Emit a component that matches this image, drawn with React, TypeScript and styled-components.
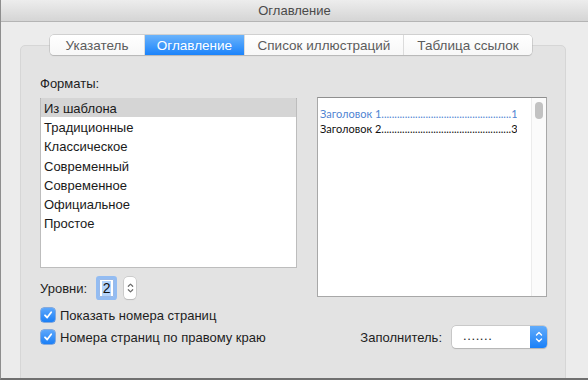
import React from "react";
import styled, { createGlobalStyle } from "styled-components";

const Global = createGlobalStyle`
  html, body { margin: 0; padding: 0; background: #ececec; }
  body { font-family: "Liberation Sans", Arial, sans-serif; }
`;

const Window = styled.div`
  width: 588px;
  height: 380px;
  box-sizing: border-box;
  border-left: 1px solid #8e8e8e;
  border-bottom: 2px solid #707070;
  background: #ececec;
  display: flex;
  flex-direction: column;
  overflow: hidden;
  font-size: 13px;
  color: #1d1d1d;
`;

const TitleBar = styled.div`
  height: 22px;
  flex: none;
  box-sizing: border-box;
  border-bottom: 1px solid #b4b4b4;
  background: linear-gradient(#ededed, #d5d5d5);
  display: flex;
  align-items: center;
  justify-content: center;
  color: #4a4a4a;
  font-size: 13px;
`;

const Body = styled.div`
  flex: 1;
  padding: 13px 22px 0 19px;
  display: flex;
  flex-direction: column;
`;

const TabBar = styled.div`
  position: relative;
  z-index: 1;
  align-self: flex-start;
  margin-left: 30px;
  height: 20px;
  display: flex;
  box-sizing: border-box;
  border-radius: 4px;
  background: linear-gradient(#ffffff, #f7f7f7);
  box-shadow: 0 0 0 0.5px #b3b3b3, 0 1px 1px rgba(0, 0, 0, 0.18);
  overflow: hidden;
`;

const Tab = styled.div<{ $w: number; $active?: boolean }>`
  width: ${(p) => p.$w}px;
  height: 20px;
  display: flex;
  align-items: center;
  justify-content: center;
  font-size: 13.5px;
  box-sizing: border-box;
  color: ${(p) => (p.$active ? "#ffffff" : "#5c5c5c")};
  background: ${(p) =>
    p.$active ? "linear-gradient(#6ab3fb, #1b83fb)" : "transparent"};
  & + & {
    border-left: 1px solid #dcdcdc;
  }
`;

const Group = styled.div`
  flex: 1;
  margin-top: -10px;
  margin-bottom: -10px;
  border: 1px solid #d6d6d6;
  border-radius: 5px;
  background: #e3e3e3;
  padding: 29px 18px 0 19px;
  display: flex;
  flex-direction: column;
`;

const TopRow = styled.div`
  display: flex;
  gap: 20px;
`;

const LeftCol = styled.div`
  width: 257px;
  display: flex;
  flex-direction: column;
`;

const RightCol = styled.div`
  width: 230px;
  padding-top: 22px;
`;

const Label = styled.div`
  height: 16px;
  line-height: 17px;
  font-size: 13px;
  color: #1d1d1d;
  white-space: nowrap;
`;

const ListBox = styled.div`
  margin-top: 7px;
  height: 170px;
  box-sizing: border-box;
  border: 1px solid #bdbdbd;
  border-top-color: #adadad;
  background: #ffffff;
`;

const ListItem = styled.div<{ $selected?: boolean }>`
  height: 19px;
  box-sizing: border-box;
  padding: 2px 0 0 3px;
  line-height: 17px;
  font-size: 13px;
  color: #1a1a1a;
  background: ${(p) => (p.$selected ? "#d5d5d5" : "transparent")};
  margin-top: ${(p) => (p.$selected ? "-1px" : "0")};
  & + & {
    margin-top: 0.2px;
  }
`;

const LevelsRow = styled.div`
  margin-top: 8px;
  height: 24px;
  display: flex;
  align-items: center;
`;

const NumberField = styled.div`
  margin-left: 12px;
  width: 15px;
  height: 18px;
  box-sizing: border-box;
  border: 1px solid #9bb9e6;
  background: #ffffff;
  box-shadow: 0 0 0 3px #93bcf2;
  border-radius: 1px;
  display: flex;
  align-items: center;
  justify-content: center;
`;

const Selected = styled.span`
  background: #b4d4fb;
  color: #111;
  font-size: 14px;
  line-height: 15px;
  padding: 0 1px;
`;

const Stepper = styled.div`
  margin-left: 10px;
  width: 12px;
  height: 22px;
  box-sizing: border-box;
  border-radius: 4px;
  background: #ffffff;
  box-shadow: 0 0 0 0.5px #b5b5b5, 0 1px 1px rgba(0, 0, 0, 0.15);
  display: flex;
  align-items: center;
  justify-content: center;
`;

const Preview = styled.div`
  height: 200px;
  box-sizing: border-box;
  border: 1px solid #a8a8a8;
  border-top-color: #8f8f8f;
  background: #ffffff;
  display: flex;
`;

const PreviewText = styled.div`
  flex: 1;
  padding: 8px 0 0 2px;
  font-family: "Lato", "Liberation Sans", sans-serif;
  font-size: 11px;
`;

const TocLine = styled.div<{ $blue?: boolean }>`
  width: 197px;
  height: 15px;
  line-height: 15px;
  display: flex;
  white-space: nowrap;
  overflow: hidden;
  color: ${(p) => (p.$blue ? "#4f84d2" : "#111111")};
`;

const Leader = styled.span`
  flex: none;
`;

const ScrollTrack = styled.div`
  width: 14px;
  border-left: 1px solid #ececec;
  background: #fbfbfb;
  display: flex;
  justify-content: center;
  padding-top: 4px;
`;

const Thumb = styled.div`
  width: 8px;
  height: 17px;
  border-radius: 4px;
  background: #c2c2c2;
`;

const BottomRows = styled.div`
  margin-top: 4px;
  display: flex;
  flex-direction: column;
`;

const Row = styled.div`
  height: 22px;
  display: flex;
  align-items: center;
  justify-content: space-between;
`;

const CheckLabel = styled.label`
  display: flex;
  align-items: center;
  gap: 5px;
  margin-left: 1px;
  font-size: 13px;
  color: #1d1d1d;
  white-space: nowrap;
`;

const CheckBox = styled.span`
  width: 14px;
  height: 14px;
  border-radius: 3px;
  background: linear-gradient(#5da7fb, #1b7ff6);
  box-shadow: 0 0 0 0.5px #2a72d6;
  display: flex;
  align-items: center;
  justify-content: center;
`;

const FillerGroup = styled.div`
  display: flex;
  align-items: center;
  gap: 10px;
`;

const Select = styled.div`
  width: 95px;
  height: 22px;
  box-sizing: border-box;
  border-radius: 4px;
  background: #ffffff;
  box-shadow: 0 0 0 0.5px #b0b0b0, 0 1px 1px rgba(0, 0, 0, 0.18);
  display: flex;
  overflow: hidden;
`;

const SelectValue = styled.div`
  flex: 1;
  padding-left: 11px;
  line-height: 20px;
  font-size: 13px;
  letter-spacing: 0.6px;
  color: #222;
`;

const SelectArrow = styled.div`
  width: 17px;
  background: linear-gradient(#62acfb, #1a80f8);
  display: flex;
  align-items: center;
  justify-content: center;
`;

const Chevrons = ({ color, w, h }: { color: string; w: number; h: number }) => (
  <svg width={w} height={h} viewBox="0 0 8 14" fill="none">
    <path d="M1.5 5 L4 2.5 L6.5 5" stroke={color} strokeWidth="1.4" strokeLinecap="round" strokeLinejoin="round" />
    <path d="M1.5 9 L4 11.5 L6.5 9" stroke={color} strokeWidth="1.4" strokeLinecap="round" strokeLinejoin="round" />
  </svg>
);

const Check = () => (
  <svg width="10" height="10" viewBox="0 0 10 10" fill="none">
    <path d="M2 5.3 L4.2 7.5 L8.2 2.3" stroke="#ffffff" strokeWidth="1.8" strokeLinecap="round" strokeLinejoin="round" />
  </svg>
);

const formats = [
  "Из шаблона",
  "Традиционные",
  "Классическое",
  "Современный",
  "Современное",
  "Официальное",
  "Простое",
];

const DOTS = ".".repeat(50);

export default function App() {
  return (
    <>
      <Global />
      <Window>
        <TitleBar>Оглавление</TitleBar>
        <Body>
          <TabBar>
            <Tab $w={94}>Указатель</Tab>
            <Tab $w={100} $active>Оглавление</Tab>
            <Tab $w={159}>Список иллюстраций</Tab>
            <Tab $w={129}>Таблица ссылок</Tab>
          </TabBar>
          <Group>
            <TopRow>
              <LeftCol>
                <Label>Форматы:</Label>
                <ListBox>
                  {formats.map((f, i) => (
                    <ListItem key={f} $selected={i === 0}>
                      {f}
                    </ListItem>
                  ))}
                </ListBox>
                <LevelsRow>
                  <Label>Уровни:</Label>
                  <NumberField>
                    <Selected>2</Selected>
                  </NumberField>
                  <Stepper>
                    <Chevrons color="#6b6b6b" w={7} h={14} />
                  </Stepper>
                </LevelsRow>
              </LeftCol>
              <RightCol>
                <Preview>
                  <PreviewText>
                    <TocLine $blue>
                      <span>Заголовок 1</span>
                      <Leader>{DOTS}</Leader>
                      <span>1</span>
                    </TocLine>
                    <TocLine>
                      <span>Заголовок 2</span>
                      <Leader>{DOTS}</Leader>
                      <span>3</span>
                    </TocLine>
                  </PreviewText>
                  <ScrollTrack>
                    <Thumb />
                  </ScrollTrack>
                </Preview>
              </RightCol>
            </TopRow>
            <BottomRows>
              <Row>
                <CheckLabel>
                  <CheckBox>
                    <Check />
                  </CheckBox>
                  Показать номера страниц
                </CheckLabel>
              </Row>
              <Row>
                <CheckLabel>
                  <CheckBox>
                    <Check />
                  </CheckBox>
                  Номера страниц по правому краю
                </CheckLabel>
                <FillerGroup>
                  <Label>Заполнитель:</Label>
                  <Select>
                    <SelectValue>.......</SelectValue>
                    <SelectArrow>
                      <Chevrons color="#ffffff" w={8} h={14} />
                    </SelectArrow>
                  </Select>
                </FillerGroup>
              </Row>
            </BottomRows>
          </Group>
        </Body>
      </Window>
    </>
  );
}
